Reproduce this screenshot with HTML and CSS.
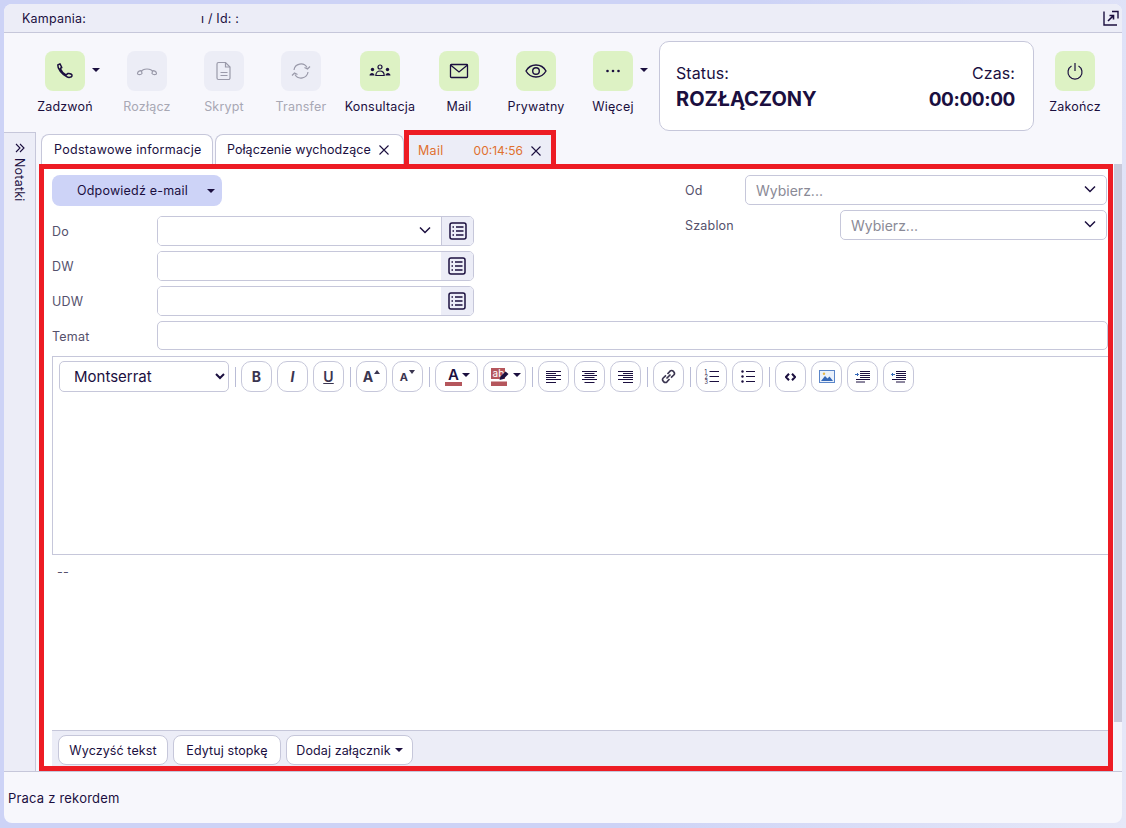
FILE: index.html
```html
<!DOCTYPE html>
<html lang="pl">
<head>
  <meta charset="UTF-8">
  <meta name="viewport" content="width=device-width, initial-scale=1.0">
  <title>Praca z rekordem</title>

  <link rel="stylesheet" href="styles.css">
</head>
<body>
  <svg class="sprites" width="0" height="0">
    <symbol id="i-list" viewBox="0 0 18 18">
      <rect x="1" y="1" width="16" height="16" rx="2" fill="none" stroke="currentColor" stroke-width="1.5"/>
      <path d="M7 5h7.500M7 9h7.500M7 13h7.500M3.500 5h1.500M3.500 9h1.500M3.500 13h1.500" stroke="currentColor" stroke-width="1.500" fill="none"/>
    </symbol>
    <symbol id="i-chevron" viewBox="0 0 12 8">
      <path d="M1 1.500l5 5 5-5" fill="none" stroke="currentColor" stroke-width="1.500"/>
    </symbol>
  </svg>

  <div class="app">
    <div class="topbar">
      <span>Kampania:</span>
      <span class="campaign-id">ı / Id: :</span>
      <svg class="popout" width="16" height="16" viewBox="0 0 16 16" fill="none" stroke="currentColor" stroke-width="1.400">
        <path d="M1 1.500v13.500h13"/>
        <path d="M9 1.500h6v7"/>
        <path d="M5 11l5.500-5.500M6.500 5.500h4v4" stroke-width="1.600"/>
      </svg>
    </div>

    <div class="toolbar">
      <div class="tool tool-first">
        <div class="tile">
          <svg width="20" height="20" viewBox="0 0 20 20" fill="none" stroke="currentColor" stroke-width="1.500" stroke-linejoin="round">
            <path d="M2.800 4L5 2.800l1.800 3.700-1.600 1c1.300 3 3.300 5 5.800 6.300l2-1.300c2-.5 4.500 1 4 2.500s-3.500 1.800-5 .8C7 13.500 2.500 8 2.800 4z"/>
          </svg>
        </div>
        <span class="caret tool-caret"></span>
        <div class="tool-label">Zadzwoń</div>
      </div>
      <div class="tool disabled">
        <div class="tile">
          <svg width="22" height="12" viewBox="0 0 22 12" fill="none" stroke="currentColor" stroke-width="1.200">
            <path d="M5 7C7 3 15 3 17 7"/>
            <path d="M1.500 8.500c0-2 3-3.500 4-2.500l.5 2.500c-1 1.500-4.500 1.500-4.500 0zM20.500 8.500c0-2-3-3.500-4-2.500l-.5 2.500c1 1.500 4.500 1.500 4.500 0z"/>
          </svg>
        </div>
        <div class="tool-label">Rozłącz</div>
      </div>
      <div class="tool disabled">
        <div class="tile">
          <svg width="16" height="20" viewBox="0 0 16 20" fill="none" stroke="currentColor" stroke-width="1.200">
            <path d="M2.500 1.500h7l4.500 4.500v11a1.500 1.500 0 0 1-1.500 1.500h-10a1.500 1.500 0 0 1-1.500-1.500v-14a1.500 1.500 0 0 1 1.500-1.500z"/>
            <path d="M9.500 1.500v4.500h4.500M4.500 11.500h7M4.500 14.500h7"/>
          </svg>
        </div>
        <div class="tool-label">Skrypt</div>
      </div>
      <div class="tool disabled">
        <div class="tile">
          <svg width="22" height="20" viewBox="0 0 22 20" fill="none" stroke="currentColor" stroke-width="1.200">
            <path d="M4 9a7 7 0 0 1 13-2.500"/>
            <path d="M18 11a7 7 0 0 1-13 2.500"/>
            <path d="M20 5.500l-2.500 2.500-3-1.500M2 14.500l2.500-2.500 3 1.500"/>
          </svg>
        </div>
        <div class="tool-label">Transfer</div>
      </div>
      <div class="tool tool-wide">
        <div class="tile">
          <svg width="22" height="14" viewBox="0 0 22 14" fill="currentColor">
            <circle cx="11" cy="3" r="2" fill="none" stroke="currentColor" stroke-width="1.200"/>
            <path d="M6.800 11.500c0-6 8.400-6 8.400 0z" fill="none" stroke="currentColor" stroke-width="1.200"/>
            <circle cx="3.500" cy="5.500" r="1.700"/>
            <circle cx="18.500" cy="5.500" r="1.700"/>
            <path d="M.500 11.500c0-3.500 5-3.500 5 0zM16.500 11.500c0-3.500 5-3.500 5 0z"/>
          </svg>
        </div>
        <div class="tool-label">Konsultacja</div>
      </div>
      <div class="tool">
        <div class="tile">
          <svg width="20" height="16" viewBox="0 0 20 16" fill="none" stroke="currentColor" stroke-width="1.300">
            <rect x="1.500" y="1.500" width="17" height="13" rx=".8"/>
            <path d="M1.500 2l8.500 7 8.500-7"/>
          </svg>
        </div>
        <div class="tool-label">Mail</div>
      </div>
      <div class="tool">
        <div class="tile">
          <svg width="22" height="16" viewBox="0 0 22 16" fill="none" stroke="currentColor" stroke-width="1.400">
            <path d="M1 8c4.500-8 15.500-8 20 0-4.500 8-15.500 8-20 0z"/>
            <circle cx="11" cy="8" r="3.300"/>
          </svg>
        </div>
        <div class="tool-label">Prywatny</div>
      </div>
      <div class="tool">
        <div class="tile">
          <svg width="16" height="4" viewBox="0 0 16 4" fill="currentColor">
            <circle cx="2.500" cy="2" r="1.300"/><circle cx="8" cy="2" r="1.300"/><circle cx="13.500" cy="2" r="1.300"/>
          </svg>
        </div>
        <span class="caret tool-caret"></span>
        <div class="tool-label">Więcej</div>
      </div>

      <div class="status-box">
        <div class="status-col">
          <div class="status-key">Status:</div>
          <div class="status-val">ROZŁĄCZONY</div>
        </div>
        <div class="status-col status-right">
          <div class="status-key">Czas:</div>
          <div class="status-val status-time">00:00:00</div>
        </div>
      </div>

      <div class="tool tool-end">
        <div class="tile">
          <svg width="18" height="18" viewBox="0 0 18 18" fill="none" stroke="currentColor" stroke-width="1.200">
            <path d="M5.500 4a7 7 0 1 0 7 0M9 1v8"/>
          </svg>
        </div>
        <div class="tool-label">Zakończ</div>
      </div>
    </div>

    <div class="work">
      <div class="notes">
        <svg width="10" height="10" viewBox="0 0 10 10" fill="none" stroke="currentColor" stroke-width="1.100">
          <path d="M1 1l4 4-4 4M5 1l4 4-4 4"/>
        </svg>
        <span class="notes-label">Notatki</span>
      </div>

      <div class="main">
        <div class="tabs">
          <div class="tab tab-basic">Podstawowe informacje</div>
          <div class="tab tab-call"><span>Połączenie wychodzące</span>
            <svg class="tab-close" width="10" height="10" viewBox="0 0 10 10" stroke="currentColor" stroke-width="1.100"><path d="M.5.5l9 9M9.500.5l-9 9"/></svg>
          </div>
          <div class="tab tab-mail">
            <span>Mail</span>
            <span class="tab-timer">00:14:56</span>
            <svg class="tab-close" width="10" height="10" viewBox="0 0 10 10" stroke="currentColor" stroke-width="1.100"><path d="M.5.5l9 9M9.500.5l-9 9"/></svg>
          </div>
        </div>

        <div class="panel">
          <div class="mail-head">
            <div class="mail-left">
              <div class="reply-btn">Odpowiedź e-mail <span class="caret"></span></div>
              <div class="field">
                <label>Do</label>
                <div class="input-group">
                  <div class="input input-select"><svg class="chevron" width="12" height="8"><use href="#i-chevron"/></svg></div>
                  <div class="addon addon-lined"><svg width="18" height="18"><use href="#i-list"/></svg></div>
                </div>
              </div>
              <div class="field">
                <label>DW</label>
                <div class="input-group">
                  <div class="input"></div>
                  <div class="addon"><svg width="18" height="18"><use href="#i-list"/></svg></div>
                </div>
              </div>
              <div class="field">
                <label>UDW</label>
                <div class="input-group">
                  <div class="input"></div>
                  <div class="addon"><svg width="18" height="18"><use href="#i-list"/></svg></div>
                </div>
              </div>
            </div>

            <div class="mail-right">
              <div class="field">
                <label class="label-od">Od</label>
                <div class="input input-select placeholder">Wybierz...<svg class="chevron" width="12" height="8"><use href="#i-chevron"/></svg></div>
              </div>
              <div class="field">
                <label class="label-szablon">Szablon</label>
                <div class="input input-select placeholder">Wybierz...<svg class="chevron" width="12" height="8"><use href="#i-chevron"/></svg></div>
              </div>
            </div>
          </div>

          <div class="field field-subject">
            <label>Temat</label>
            <div class="input"></div>
          </div>

          <div class="editor">
            <div class="editor-tools">
              <select class="font-select"><option>Montserrat</option></select>
              <span class="sep"></span>
              <div class="ebtn ebtn-bold">B</div>
              <div class="ebtn ebtn-italic">I</div>
              <div class="ebtn ebtn-under">U</div>
              <span class="sep"></span>
              <div class="ebtn ebtn-size">A<svg width="6" height="4" viewBox="0 0 6 4"><path d="M3 0l3 4H0z"/></svg></div>
              <div class="ebtn ebtn-size ebtn-small">A<svg width="6" height="4" viewBox="0 0 6 4"><path d="M0 0h6L3 4z"/></svg></div>
              <span class="sep"></span>
              <div class="ebtn ebtn-color">
                <span class="color-a">A</span><span class="caret caret-up"></span>
              </div>
              <div class="ebtn ebtn-color">
                <svg width="22" height="18" viewBox="0 0 22 18">
                  <rect x="0" y="0" width="14" height="11" fill="#b5565c"/>
                  <text x="1.500" y="8.500" font-size="10" fill="#fff" font-family="Inter, sans-serif">ab</text>
                  <rect x="0" y="13.500" width="16" height="4.500" fill="#b5565c"/>
                  <path d="M8.500 12l1-3.500 5-5 3 2.500-5 5z" fill="#1b0f3f"/>
                </svg>
                <span class="caret caret-up"></span>
              </div>
              <span class="sep"></span>
              <div class="ebtn"><svg width="15" height="12" viewBox="0 0 15 12" stroke="#1b0f3f"><path d="M0 .5h15M0 2.500h10M0 4.500h15M0 6.500h10M0 8.500h15M0 11.500h10"/></svg></div>
              <div class="ebtn"><svg width="15" height="12" viewBox="0 0 15 12" stroke="#1b0f3f"><path d="M0 .5h15M2.500 2.500h10M0 4.500h15M2.500 6.500h10M0 8.500h15M2.500 11.500h10"/></svg></div>
              <div class="ebtn"><svg width="15" height="12" viewBox="0 0 15 12" stroke="#1b0f3f"><path d="M0 .5h15M5 2.500h10M0 4.500h15M5 6.500h10M0 8.500h15M5 11.500h10"/></svg></div>
              <span class="sep"></span>
              <div class="ebtn">
                <svg width="15" height="15" viewBox="0 0 15 15" fill="none" stroke="#3a3550" stroke-width="1.700">
                  <path d="M6.500 5L9 2.200a2.200 2.200 0 0 1 3.200 0l.6.6a2.200 2.200 0 0 1 0 3.200L10 8.700"/>
                  <path d="M8.500 10L6 12.800a2.200 2.200 0 0 1-3.200 0l-.6-.6a2.200 2.200 0 0 1 0-3.200L5 6.300"/>
                  <path d="M5.500 9.500l4-4"/>
                </svg>
              </div>
              <span class="sep"></span>
              <div class="ebtn">
                <svg width="15" height="15" viewBox="0 0 15 15" fill="#1b0f3f" font-size="5.500" font-family="Inter, sans-serif">
                  <path d="M5.500 2.500h9.500M5.500 7.500h9.500M5.500 12.500h9.500" stroke="#1b0f3f"/>
                  <text x=".5" y="4.500">1</text>
                  <text x=".5" y="9.500">2</text>
                  <text x=".5" y="14.500">3</text>
                </svg>
              </div>
              <div class="ebtn">
                <svg width="14" height="13" viewBox="0 0 14 13" stroke="#1b0f3f" fill="#1b0f3f">
                  <path d="M5 1.500h9M5 6.500h9M5 11.500h9"/>
                  <circle cx="1.500" cy="1.500" r="1.200" stroke="none"/><circle cx="1.500" cy="6.500" r="1.200" stroke="none"/><circle cx="1.500" cy="11.500" r="1.200" stroke="none"/>
                </svg>
              </div>
              <span class="sep"></span>
              <div class="ebtn">
                <svg width="11" height="8" viewBox="0 0 11 8" fill="none" stroke="#1b0f3f" stroke-width="2"><path d="M4 .8L1 4l3 3.200M7 .8L10 4 7 7.200"/></svg>
              </div>
              <div class="ebtn">
                <svg width="16" height="13" viewBox="0 0 16 13">
                  <rect x=".5" y=".5" width="15" height="12" fill="#eaf1fb" stroke="#5b86c9"/>
                  <path d="M2 11l4-5 2.500 2.500 2-2L14 11z" fill="#3568b8"/>
                  <circle cx="5" cy="3.800" r="1.200" fill="#e6b84c"/>
                </svg>
              </div>
              <div class="ebtn">
                <svg width="15" height="12" viewBox="0 0 15 12" stroke="#1b0f3f" fill="none"><path d="M5 .5h10M5 2.500h10M5 4.500h10M5 6.500h10M1 8.500h14M1 11h9"/><path d="M0 3.500h3.500M2 2l1.500 1.500L2 5" stroke="#3568b8"/></svg>
              </div>
              <div class="ebtn">
                <svg width="15" height="12" viewBox="0 0 15 12" stroke="#1b0f3f" fill="none"><path d="M5 .5h10M5 2.500h10M5 4.500h10M5 6.500h10M1 8.500h14M5 11h9"/><path d="M.5 3.500h3.500M2 2L.500 3.500 2 5" stroke="#3568b8"/></svg>
              </div>
            </div>
          </div>

          <div class="signature">--</div>

          <div class="mail-actions">
            <div class="action action-clear">Wyczyść tekst</div>
            <div class="action action-footer">Edytuj stopkę</div>
            <div class="action action-attach">Dodaj załącznik <span class="caret"></span></div>
          </div>
        </div>

        <div class="scroll"><div class="scroll-thumb"></div></div>
      </div>
    </div>

    <div class="footer">Praca z rekordem</div>
  </div>
</body>
</html>
```

FILE: styles.css
```css
* {
  box-sizing: border-box;
}

body {
  margin: 0;
  height: 828px;
  padding: 4px 4px 5px 4px;
  overflow: hidden;
  background: linear-gradient(100deg, #cdd3f6 60%, #e6e8f8);
  font-family: Inter, "Noto Sans", sans-serif;
  font-size: 12.5px;
  letter-spacing: 0.2px;
  color: #1b0f3f;
}

.sprites {
  position: absolute;
}

.app {
  display: flex;
  flex-direction: column;
  height: 100%;
  border-radius: 8px;
  overflow: hidden;
  background: #f7f7fc;
}

/* top strip */
.topbar {
  display: flex;
  align-items: center;
  flex: none;
  height: 29px;
  padding: 0 3px 0 18px;
  background: #ecedf7;
  border-bottom: 1px solid #c6c7da;
}

.campaign-id {
  margin-left: 115px;
}

.popout {
  margin-left: auto;
}

/* call toolbar */
.toolbar {
  display: flex;
  flex: none;
  align-items: flex-start;
  height: 99px;
  padding: 8px 0 0 23px;
  gap: 1px;
}

.tool {
  position: relative;
  display: flex;
  flex-direction: column;
  align-items: center;
  width: 76px;
  padding-top: 10px;
}

.tool-first {
  margin-right: 5px;
}

.tool-wide {
  margin: 0 2px;
}

.tool-end {
  margin-left: 2px;
}

.tile {
  display: flex;
  align-items: center;
  justify-content: center;
  width: 40px;
  height: 40px;
  border-radius: 8px;
  background: #ddf2c4;
}

.tool-label {
  margin-top: 8px;
  line-height: 16px;
  white-space: nowrap;
}

.tool.disabled .tile {
  background: #ecedf6;
  color: #9a9aaa;
}

.tool.disabled .tool-label {
  color: #a8a8b4;
}

.caret {
  display: inline-block;
  width: 0;
  height: 0;
  border-left: 4px solid transparent;
  border-right: 4px solid transparent;
  border-top: 4px solid currentColor;
}

.tool-caret {
  position: absolute;
  top: 27px;
  left: 65px;
}

.status-box {
  display: flex;
  justify-content: space-between;
  width: 375px;
  height: 90px;
  margin-left: 7px;
  padding: 21px 18px 21px 16px;
  background: #fff;
  border: 1px solid #c6c7da;
  border-radius: 10px;
}

.status-key {
  font-size: 16px;
  letter-spacing: 0.1px;
  line-height: 20px;
}

.status-val {
  margin-top: 5px;
  font-size: 20px;
  font-weight: 700;
  letter-spacing: 0;
  line-height: 23px;
}

.status-time {
  font-size: 19px;
  letter-spacing: -0.4px;
}

.status-right {
  text-align: right;
}

/* work area */
.work {
  display: flex;
  flex: none;
  height: 639px;
}

.notes {
  display: flex;
  flex-direction: column;
  align-items: center;
  flex: none;
  width: 32px;
  padding-top: 10px;
  background: #ecedf7;
  border-top: 1px solid #c6c7da;
  border-right: 1px solid #c6c7da;
}

.notes-label {
  margin-top: 5px;
  writing-mode: vertical-rl;
}

.main {
  display: flex;
  flex-direction: column;
  position: relative;
  flex: 1;
  min-width: 0;
  padding-left: 3px;
}

.tabs {
  display: flex;
  flex: none;
  height: 32px;
  padding-left: 2px;
  align-items: flex-end;
  letter-spacing: 0.3px;
}

.tab {
  display: flex;
  align-items: center;
  height: 30px;
  padding-left: 12px;
  white-space: nowrap;
  background: #fff;
  border: 1px solid #c6c7da;
  border-bottom: 0;
  border-radius: 8px 8px 0 0;
}

.tab-basic {
  width: 172px;
  margin-right: 2px;
}

.tab-call {
  width: 189px;
  padding-left: 11px;
  letter-spacing: 0.05px;
}

.tab-close {
  flex: none;
  margin-left: 8px;
}

.tab-mail {
  width: 152px;
  height: 34px;
  margin-top: -2px;
  padding-left: 9px;
  padding-top: 2px;
  border: 5px solid #ed1c24;
  border-bottom: 0;
  border-radius: 0;
  background: #ecedf7;
  color: #e0702f;
}

.tab-timer {
  margin-left: 30px;
  font-size: 12px;
  letter-spacing: 0;
}

.tab-mail .tab-close {
  color: #1b0f3f;
}

.panel {
  display: flex;
  flex-direction: column;
  position: relative;
  width: 1074px;
  height: 608px;
  padding: 6px 0 0 8px;
  background: #fff;
  border: 5px solid #ed1c24;
  overflow: hidden;
}

.mail-head {
  display: flex;
  justify-content: space-between;
  flex: none;
}

.mail-left {
  display: flex;
  flex-direction: column;
  gap: 5px;
  width: 422px;
}

.mail-right {
  display: flex;
  flex-direction: column;
  gap: 5px;
  width: 422px;
  margin-right: 1px;
}

.reply-btn {
  display: flex;
  align-items: center;
  justify-content: space-between;
  width: 170px;
  height: 31px;
  margin-bottom: 5px;
  padding: 0 7px 0 25px;
  background: #cdd3f7;
  border-radius: 8px;
}

.field {
  display: flex;
  align-items: center;
  height: 30px;
}

.field label {
  flex: none;
  width: 105px;
  color: #55516c;
}

.field .label-od {
  width: 60px;
}

.field .label-szablon {
  width: 155px;
}

.input-group {
  display: flex;
  flex: 1;
  height: 30px;
  border: 1px solid #c6c7da;
  border-radius: 5px;
  overflow: hidden;
}

.input {
  display: flex;
  align-items: center;
  position: relative;
  flex: 1;
  height: 30px;
  padding-left: 10px;
  border: 1px solid #c6c7da;
  border-radius: 5px;
  background: #fff;
}

.input-group .input {
  height: 100%;
  border: 0;
  border-radius: 0;
}

.placeholder {
  font-size: 14px;
  letter-spacing: 0;
  color: #8a8a96;
}

.chevron {
  position: absolute;
  right: 10px;
  top: 9px;
  color: #1b0f3f;
}

.addon {
  display: flex;
  align-items: center;
  justify-content: center;
  flex: none;
  width: 32px;
  background: #ecedf7;
}

.addon-lined {
  border-left: 1px solid #c6c7da;
}

.field-subject {
  flex: none;
  height: 29px;
  margin-top: 5px;
}

.field-subject label {
  padding-top: 2px;
}

.field-subject .input {
  height: 29px;
}

.editor {
  flex: none;
  height: 199px;
  margin-top: 6px;
  border: 1px solid #c6c7da;
  border-right: 0;
}

.editor-tools {
  display: flex;
  align-items: center;
  gap: 5px;
  padding: 4px 6px;
}

.font-select {
  width: 170px;
  height: 31px;
  padding-left: 10px;
  font-family: Inter, "Noto Sans", sans-serif;
  font-size: 15px;
  color: #1b0f3f;
  background: #fff;
  border: 1px solid #c6c7da;
  border-radius: 5px;
}

.sep {
  width: 1px;
  height: 20px;
  margin-left: 1px;
  background: #b9bcd6;
}

.ebtn {
  display: flex;
  align-items: center;
  justify-content: center;
  width: 31px;
  height: 31px;
  background: #fff;
  border: 1px solid #c6c7da;
  border-radius: 10px;
  font-size: 14px;
}

.ebtn-bold {
  font-weight: 700;
  color: #3a3550;
}

.ebtn-italic {
  font-style: italic;
  font-weight: 700;
  color: #3a3550;
}

.ebtn-under {
  font-weight: 600;
  color: #3a3550;
  text-decoration: underline;
}

.ebtn-size {
  align-items: center;
  font-weight: 700;
  color: #3a3550;
}

.ebtn-size svg {
  align-self: flex-start;
  margin: 8px 0 0 1px;
  fill: #3a3550;
}

.ebtn-small {
  font-size: 11px;
}

.ebtn-color {
  width: 43px;
  gap: 0;
  padding-left: 2px;
}

.color-a {
  width: 17px;
  font-size: 15px;
  font-weight: 600;
  line-height: 15px;
  text-align: center;
  border-bottom: 4px solid #b5565c;
}

.caret-up {
  margin-bottom: 3px;
}

.signature {
  flex: 1;
  padding: 9px 0 0 5px;
  color: #55516c;
}

.mail-actions {
  display: flex;
  flex: none;
  gap: 5px;
  height: 36px;
  padding: 4px 6px 0;
  background: #ecedf7;
  border-top: 1px solid #c6c7da;
}

.action {
  display: flex;
  align-items: center;
  justify-content: center;
  gap: 4px;
  height: 30px;
  background: #fff;
  border: 1px solid #c6c7da;
  border-radius: 8px;
  letter-spacing: 0.1px;
}

.action-clear {
  width: 110px;
}

.action-footer {
  width: 108px;
}

.action-attach {
  width: 127px;
}

.scroll {
  position: absolute;
  left: 1078px;
  top: 32px;
  bottom: 0;
  width: 8px;
  background: #f4f4fa;
}

.scroll-thumb {
  height: 558px;
  background: #c9cadb;
}

.footer {
  position: relative;
  flex: 1;
  padding: 18px 4px;
  border-top: 1px solid #c6c7da;
  font-size: 13px;
  line-height: 16px;
}
```
